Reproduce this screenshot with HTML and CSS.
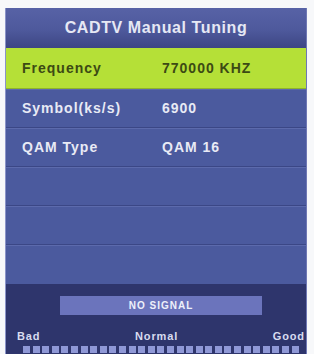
FILE: index.html
```html
<!DOCTYPE html>
<html lang="en">
<head>
    <meta charset="UTF-8" />
    <title>CADTV Manual Tuning</title>
    <link rel="stylesheet" href="styles.css">
</head>
<body>
    <div class="panel">
        <div class="title">CADTV Manual Tuning</div>

        <div class="menu">
            <div class="row active">
                <span class="label">Frequency</span>
                <span class="value">770000 KHZ</span>
            </div>
            <div class="row">
                <span class="label">Symbol(ks/s)</span>
                <span class="value">6900</span>
            </div>
            <div class="row">
                <span class="label">QAM Type</span>
                <span class="value">QAM 16</span>
            </div>
            <div class="row empty"></div>
            <div class="row empty"></div>
            <div class="row empty last"></div>
        </div>

        <div class="signal">
            <div class="status">NO SIGNAL</div>
            <div class="scale">
                <span>Bad</span>
                <span>Normal</span>
                <span>Good</span>
            </div>
            <div class="dots">
                <i></i><i></i><i></i><i></i><i></i><i></i><i></i><i></i><i></i><i></i>
                <i></i><i></i><i></i><i></i><i></i><i></i><i></i><i></i><i></i><i></i>
                <i></i><i></i><i></i><i></i><i></i><i></i><i></i><i></i><i></i>
            </div>
        </div>
    </div>
</body>
</html>
```

FILE: styles.css
```css
body {
    margin: 0;
    background-color: #f7f8fa;
    font-family: "Liberation Sans", Arial, sans-serif;
    overflow: hidden;
}

.panel {
    margin: 8px 0 0 5px;
    width: 302px;
    height: 346px;
    background-color: #2e356c;
    border-left: 1px solid #8a93c8;
    border-right: 1px solid #6f78b4;
    box-sizing: border-box;
}

.title {
    height: 40px;
    display: flex;
    align-items: center;
    justify-content: center;
    color: #e6e8f4;
    font-size: 16px;
    font-weight: bold;
    letter-spacing: 0.6px;
    background: linear-gradient(#5762a6, #4e599c 55%, #3d4684);
}

.row {
    display: flex;
    align-items: center;
    height: 38px;
    padding-left: 16px;
    color: #e8eaf5;
    font-size: 14px;
    font-weight: bold;
    letter-spacing: 1px;
    background-color: #4b5a9e;
    border-bottom: 1px solid #3b4786;
    box-shadow: inset 0 1px 0 #5c6aac;
}

.row.active {
    height: 40px;
    background-color: #b5e037;
    color: #3c4a14;
    border-bottom: 1px solid #8fb52a;
    box-shadow: none;
}

.row.last {
    height: 39px;
    border-bottom: none;
}

.label {
    width: 140px;
}

.signal {
    padding-top: 12px;
}

.status {
    margin-left: 54px;
    width: 202px;
    height: 19px;
    display: flex;
    align-items: center;
    justify-content: center;
    background-color: #6b74bc;
    color: #eef0fa;
    font-size: 10px;
    font-weight: bold;
    letter-spacing: 1px;
}

.scale {
    display: flex;
    justify-content: space-between;
    padding: 0 1px 0 11px;
    margin-top: 14px;
    color: #d8dcf0;
    font-size: 11px;
    font-weight: bold;
    letter-spacing: 0.9px;
    line-height: 14px;
}

.dots {
    display: flex;
    gap: 2.6px;
    margin: 3px 0 0 17px;
}

.dots i {
    width: 7px;
    height: 7px;
    background-color: #8f98d6;
}
```
